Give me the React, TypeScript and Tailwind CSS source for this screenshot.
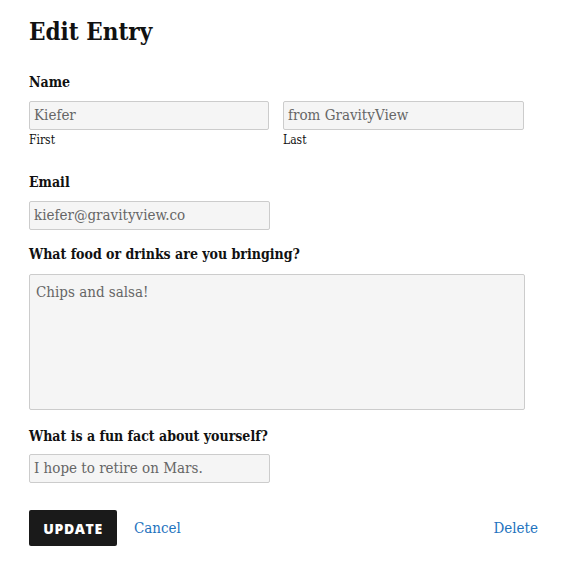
import React from "react";

const serif = { fontFamily: '"DejaVu Serif Condensed", "DejaVu Serif", "Liberation Serif", serif' };

function Label({ children, className = "" }: { children: React.ReactNode; className?: string }) {
  return (
    <div className={`text-[14px] font-bold leading-[18px] text-[#111] ${className}`}>{children}</div>
  );
}

function Field({ value, className = "" }: { value: string; className?: string }) {
  return (
    <div
      className={`h-[29px] border border-[#cccccc] rounded-[2px] bg-[#f5f5f5] px-[4px] flex items-center text-[15px] text-[#666] ${className}`}
    >
      {value}
    </div>
  );
}

export default function App() {
  return (
    <div className="w-[564px] h-[564px] bg-white px-[29px] pt-[15px]" style={serif}>
      <h1 className="text-[24px] font-bold leading-[34px] text-[#111]">Edit Entry</h1>

      <Label className="mt-[24px]">Name</Label>
      <div className="mt-[10px] flex gap-[14px]">
        <div className="w-[240px]">
          <Field value="Kiefer" />
          <div className="mt-[3px] text-[12px] leading-[14px] text-[#111]">First</div>
        </div>
        <div className="w-[241px]">
          <Field value="from GravityView" />
          <div className="mt-[3px] text-[12px] leading-[14px] text-[#111]">Last</div>
        </div>
      </div>

      <Label className="mt-[26px]">Email</Label>
      <Field value="kiefer@gravityview.co" className="mt-[10px] w-[241px] h-[28px]" />

      <Label className="mt-[15px]">What food or drinks are you bringing?</Label>
      <div className="mt-[11px] w-[496px] h-[136px] border border-[#cccccc] rounded-[2px] bg-[#f5f5f5] px-[6px] pt-[6px] text-[15px] text-[#666]">
        Chips and salsa!
      </div>

      <Label className="mt-[17px]">What is a fun fact about yourself?</Label>
      <Field value="I hope to retire on Mars." className="mt-[9px] w-[241px] h-[28px]" />

      <div className="mt-[27px] flex items-center">
        <div
          className="w-[88px] h-[36px] bg-[#1a1a1a] rounded-[2px] flex items-center justify-center text-white text-[14px] font-extrabold tracking-[0.6px]"
          style={{ fontFamily: '"Open Sans", "Liberation Sans", sans-serif' }}
        >
          UPDATE
        </div>
        <a className="ml-[17px] text-[15px] text-[#1e73be]">Cancel</a>
        <a className="ml-auto mr-[-3px] text-[15px] text-[#1e73be]">Delete</a>
      </div>
    </div>
  );
}
